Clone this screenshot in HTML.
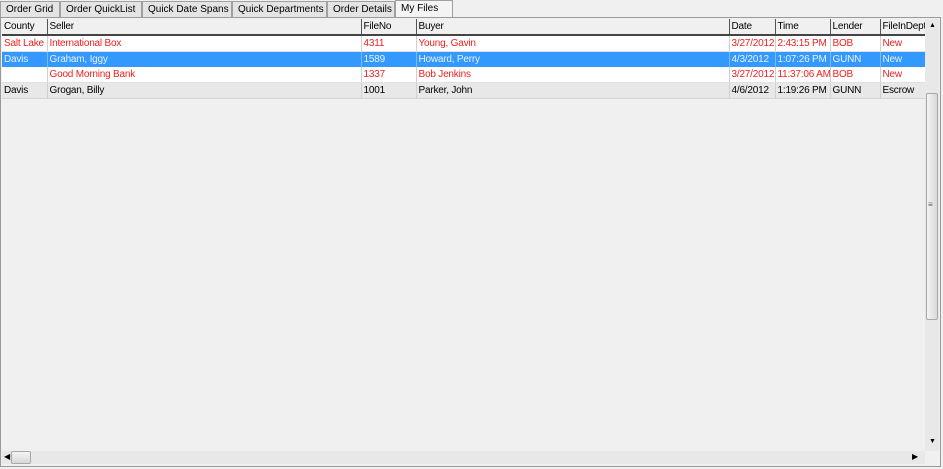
<!DOCTYPE html>
<html><head><style>
body{margin:0;width:943px;height:469px;background:#f0f0f0;font-family:"Liberation Sans",sans-serif;font-size:10px;position:relative;overflow:hidden}
.tab{position:absolute;top:1px;height:16px;background:#e4e4e4;border:1px solid #a0a0a0;border-bottom:none;line-height:16px;padding-left:5px;box-sizing:border-box;color:#000;white-space:nowrap;overflow:hidden}
.tab.sel{background:#f4f4f4;top:0;height:18px}
.frame{position:absolute;left:0;top:17px;width:941px;height:450px;border:1px solid #999;background:#f0f0f0;box-sizing:border-box}
table{position:absolute;left:2px;top:19px;width:923px;border-collapse:collapse;table-layout:fixed;letter-spacing:-0.2px}
td{height:15px;padding:0 0 0 2px;border-right:1px solid #d0d0d0;white-space:nowrap;overflow:hidden;line-height:15px}
tr.h td{background:#f0f0f0;border-right:1px solid #555;border-bottom:2px solid #444;height:15px}
tr.w td{background:#fff;color:#f02020;border-bottom:1px solid #e0e0e0}
tr.s td{background:#3399ff;color:#e8f0ff;border-right-color:#80b8f0}
tr.g td{background:#e8e8e8;color:#000;border-bottom:1px solid #d4d4d4}
.vs{position:absolute;left:925px;top:19px;width:14px;height:432px;background:#e8e8e8}
.vt{position:absolute;left:926px;top:93px;width:12px;height:227px;background:linear-gradient(90deg,#f4f4f4,#d8d8d8);border:1px solid #a8a8a8;box-sizing:border-box;border-radius:2px}
.hs{position:absolute;left:2px;top:451px;width:923px;height:13px;background:#e8e8e8}
.ht{position:absolute;left:11px;top:451px;width:20px;height:13px;background:linear-gradient(#f4f4f4,#d8d8d8);border:1px solid #a8a8a8;box-sizing:border-box;border-radius:2px}
</style></head><body>
<div class="tab" style="left:0;width:60px">Order Grid</div>
<div class="tab" style="left:60px;width:82px">Order QuickList</div>
<div class="tab" style="left:142px;width:90px">Quick Date Spans</div>
<div class="tab" style="left:232px;width:95px">Quick Departments</div>
<div class="tab" style="left:327px;width:68px">Order Details</div>
<div class="tab sel" style="left:395px;width:58px">My Files</div>
<div class="frame"></div>
<table>
<colgroup><col style="width:45px"><col style="width:314px"><col style="width:55px"><col style="width:313px"><col style="width:46px"><col style="width:55px"><col style="width:50px"><col style="width:45px"></colgroup>
<tr class="h"><td>County</td><td>Seller</td><td>FileNo</td><td>Buyer</td><td>Date</td><td>Time</td><td>Lender</td><td>FileInDept</td></tr>
<tr class="w"><td>Salt Lake</td><td>International Box</td><td>4311</td><td>Young, Gavin</td><td>3/27/2012</td><td>2:43:15 PM</td><td>BOB</td><td>New</td></tr>
<tr class="s"><td>Davis</td><td>Graham, Iggy</td><td>1589</td><td>Howard, Perry</td><td>4/3/2012</td><td>1:07:26 PM</td><td>GUNN</td><td>New</td></tr>
<tr class="w"><td></td><td>Good Morning Bank</td><td>1337</td><td>Bob Jenkins</td><td>3/27/2012</td><td>11:37:06 AM</td><td>BOB</td><td>New</td></tr>
<tr class="g"><td>Davis</td><td>Grogan, Billy</td><td>1001</td><td>Parker, John</td><td>4/6/2012</td><td>1:19:26 PM</td><td>GUNN</td><td>Escrow</td></tr>
</table>
<div class="vs"></div><div class="vt"></div>
<div style="position:absolute;left:929px;top:22px;font-size:7px">▲</div>
<div style="position:absolute;left:929px;top:438px;font-size:7px">▼</div>
<div style="position:absolute;left:928px;top:200px;font-size:8px;color:#555">≡</div>
<div class="hs"></div><div class="ht"></div>
<div style="position:absolute;left:4px;top:452px;font-size:8px">◀</div>
<div style="position:absolute;left:912px;top:452px;font-size:8px">▶</div>
</body></html>
